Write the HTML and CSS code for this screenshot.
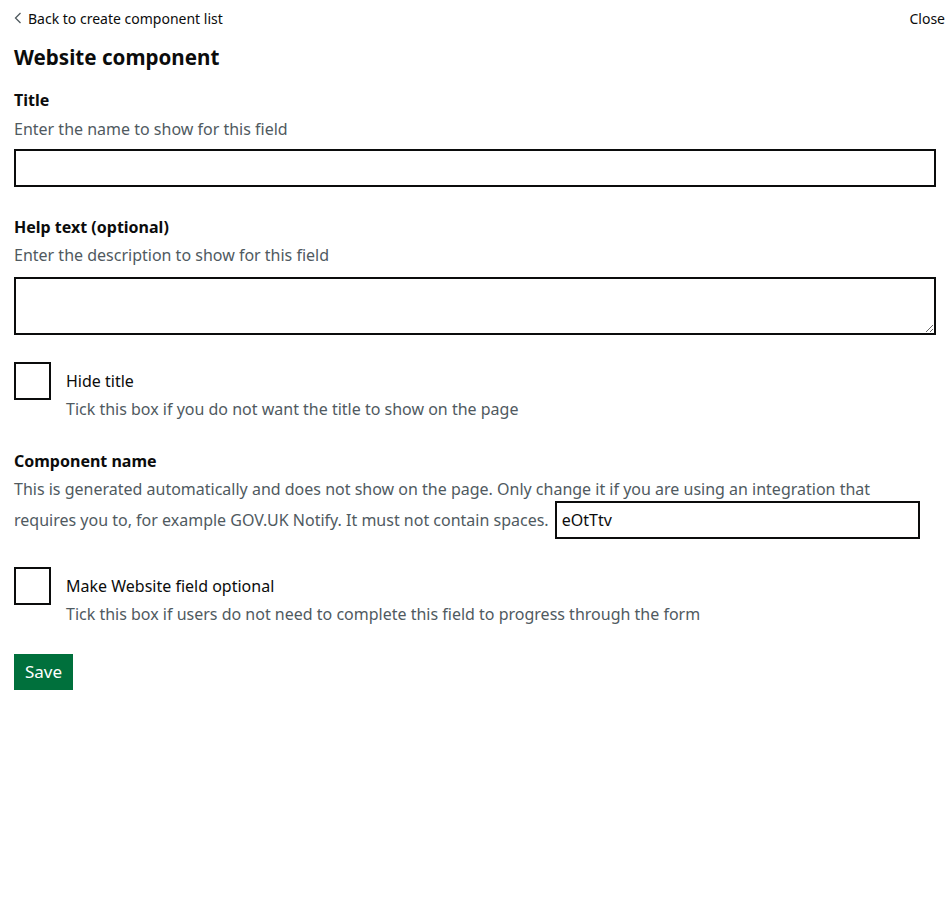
FILE: index.html
```html
<!DOCTYPE html>
<html lang="en">
<head>
<meta charset="utf-8">
<title>Website component</title>
<link rel="stylesheet" href="styles.css">
</head>
<body>
<div class="page">
  <div class="topbar">
    <a class="back-link" href="#"><svg class="chev" width="8" height="12" viewBox="0 0 8 12"><path d="M6.5 1 L1.5 6 L6.5 11" fill="none" stroke="#505a5f" stroke-width="1.3"/></svg>Back to create component list</a>
    <a class="close-link" href="#">Close</a>
  </div>
  <h1 class="heading">Website component</h1>

  <div class="group first">
    <label class="label">Title</label>
    <div class="hint">Enter the name to show for this field</div>
    <input class="input" type="text">
  </div>

  <div class="group">
    <label class="label">Help text (optional)</label>
    <div class="hint">Enter the description to show for this field</div>
    <textarea class="textarea"></textarea>
  </div>

  <div class="check-group">
    <div class="checkbox"></div>
    <div class="check-text">
      <div class="check-label">Hide title</div>
      <div class="hint check-hint">Tick this box if you do not want the title to show on the page</div>
    </div>
  </div>

  <div class="group">
    <label class="label">Component name</label>
    <div class="hint inline-hint">This is generated automatically and does not show on the page. Only change it if you are using an integration that requires you to, for example GOV.UK Notify. It must not contain spaces. <input class="input inline-input" type="text" value="eOtTtv"></div>
  </div>

  <div class="check-group second">
    <div class="checkbox"></div>
    <div class="check-text">
      <div class="check-label">Make Website field optional</div>
      <div class="hint check-hint">Tick this box if users do not need to complete this field to progress through the form</div>
    </div>
  </div>

  <button class="button" type="button">Save</button>
</div>
</body>
</html>
```
FILE: styles.css
```css
html, body {
  margin: 0;
  padding: 0;
  background: #fff;
}
body {
  font-family: "Noto Sans", "Liberation Sans", Arial, sans-serif;
  color: #0b0c0c;
}
.page {
  padding: 0 7px 0 14px;
}
.topbar {
  display: flex;
  justify-content: space-between;
  align-items: center;
  padding-top: 8px;
  height: 20px;
}
.back-link, .close-link {
  font-size: 14px;
  color: #0b0c0c;
  text-decoration: none;
  display: flex;
  align-items: center;
}
.chev {
  margin-right: 6px;
}
.heading {
  font-size: 20.6px;
  font-weight: 700;
  margin: 14px 0 0 0;
  line-height: 30px;
}
.group {
  margin-right: 9px;
}
.group.first {
  margin-top: 16px;
}
.label {
  display: block;
  font-size: 16px;
  font-weight: 700;
  line-height: 24px;
}
.hint {
  font-size: 16px;
  color: #505a5f;
  line-height: 24px;
  margin-top: 4px;
}
.group.first .hint {
  margin-top: 5px;
}
.input {
  display: block;
  box-sizing: border-box;
  width: 100%;
  height: 38px;
  border: 2px solid #0b0c0c;
  margin: 8px 0 0 0;
  font-family: inherit;
  font-size: 16px;
  padding: 5px;
  border-radius: 0;
}
.textarea {
  display: block;
  box-sizing: border-box;
  width: 100%;
  height: 58px;
  border: 2px solid #0b0c0c;
  margin: 10px 0 0 0;
  font-family: inherit;
  border-radius: 0;
}
.group + .group {
  margin-top: 28px;
}
.check-group {
  display: flex;
  margin-top: 27px;
}
.check-group.second {
  margin-top: 30px;
}
.checkbox {
  box-sizing: border-box;
  width: 37px;
  height: 38px;
  border: 2px solid #0b0c0c;
  flex-shrink: 0;
}
.check-text {
  padding-left: 15px;
  padding-top: 7px;
}
.check-label {
  font-size: 16px;
  line-height: 24px;
}
.check-hint {
  margin-top: 4px;
}
.check-group + .group {
  margin-top: 28px;
}
.inline-hint {
  margin-top: 1px;
  line-height: 31px;
}
.inline-input {
  display: inline-block;
  width: 365px;
  margin: -6px 0 -2px 2px;
  vertical-align: middle;
  color: #0b0c0c;
}
.button {
  display: block;
  margin-top: 28px;
  background: #00703c;
  color: #fff;
  border: 0;
  box-shadow: 0 2px 0 #002d18;
  font-family: inherit;
  font-size: 17px;
  height: 36px;
  padding: 0 11px;
  border-radius: 0;
}
```
